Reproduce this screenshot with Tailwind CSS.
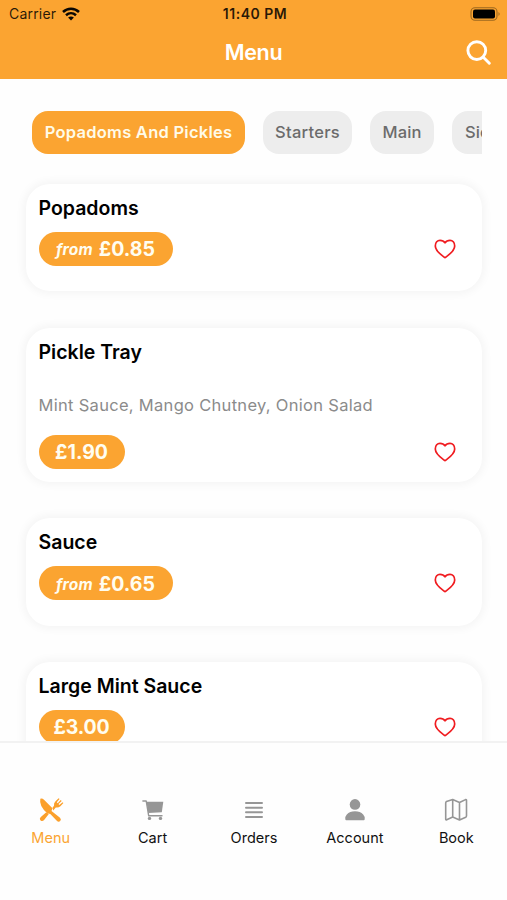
<!DOCTYPE html>
<html lang="en">
<head>
<meta charset="utf-8">
<title>Menu</title>
<script src="https://cdn.jsdelivr.net/npm/@tailwindcss/browser@4"></script>
</head>
<body class="bg-[#fefefe] font-['Inter','Liberation_Sans',sans-serif]">
<svg class="hidden">
  <symbol id="heart" viewBox="0 0 22 20"><path d="M11 18.700C8.200 16.500 1.300 12.500 1.300 7C1.300 3.600 3.400 1.400 6 1.400C8.400 1.400 10 2.400 11 3.900C12 2.400 13.600 1.400 16 1.400C18.600 1.400 20.700 3.600 20.700 7C20.700 12.500 13.800 16.500 11 18.700Z" fill="none" stroke="#f01c20" stroke-width="1.700" stroke-linejoin="round"/></symbol>
</svg>
<div class="flex h-[900px] w-[507px] flex-col overflow-hidden">
  <header class="h-[79px] shrink-0 bg-[#fba431]">
    <div class="grid h-[27px] grid-cols-[1fr_auto_1fr] items-center pl-[9px] pr-[6px] text-[14px] leading-none text-black/85">
      <div class="flex items-center gap-[6px]"><span class="tracking-[0.2px]">Carrier</span>
        <svg class="h-[14px] w-[18px]" viewBox="0 0 18 14" fill="none" stroke="#0a0703" stroke-width="2.500"><path d="M1 5C5.500 .6 12.500 .6 17 5M4 8.200C7 5.500 11 5.500 14 8.200"/><path d="M9 13.500L6.100 10.500Q9 8.400 11.900 10.500Z" fill="#0a0703" stroke="none"/></svg>
      </div>
      <span class="text-center text-[14px] font-semibold tracking-[0.5px]">11:40 PM</span>
      <svg class="h-[14px] w-[31px] justify-self-end" viewBox="0 0 31 14"><rect x="1" y=".7" width="26" height="12.600" rx="4" fill="none" stroke="#9c671f" stroke-width="1.100"/><rect x="3" y="2.600" width="22" height="8.800" rx="2" fill="#000"/><path d="M28.500 5Q30.800 7 28.500 9Z" fill="#9c671f"/></svg>
    </div>
    <div class="grid h-[51px] grid-cols-3 items-center px-[16px]">
      <h1 class="col-start-2 pt-[1px] text-center text-[21.5px] font-semibold leading-none tracking-[-0.3px] text-white">Menu</h1>
      <svg class="h-[25px] w-[25px] justify-self-end" viewBox="0 0 25 25" fill="none" stroke="#fff" stroke-width="2.900" stroke-linecap="round"><circle cx="10.800" cy="10.600" r="8.900"/><path d="M17.300 17.200L23.300 23.200"/></svg>
    </div>
  </header>
  <main class="min-h-0 flex-1 overflow-hidden">
    <nav class="ml-[32px] mr-[25px] mt-[32px] flex h-[43px] gap-[18px] overflow-hidden whitespace-nowrap text-[16.5px] font-medium tracking-[0.1px] text-[#6b6b6b]">
      <a class="flex w-[213px] shrink-0 items-center justify-center rounded-[16px] bg-[#fba431] font-semibold tracking-[0.25px] text-[#fffbe8]">Popadoms And Pickles</a>
      <a class="flex w-[89px] shrink-0 items-center justify-center rounded-[16px] bg-[#ededed] tracking-[0.25px]">Starters</a>
      <a class="flex w-[64px] shrink-0 items-center justify-center rounded-[16px] bg-[#ededed]">Main</a>
      <a class="flex w-[74px] shrink-0 items-center rounded-[16px] bg-[#ededed] pl-[13px]">Sides</a>
    </nav>
    <section class="ml-[26px] mr-[25px] mt-[30px] flex flex-col gap-[36.5px]">
      <article class="flex h-[107.3px] flex-col rounded-[24px] bg-white pl-[12.5px] pr-[26.5px] pt-[12px] shadow-[0_0_8px_3px_rgba(0,0,0,0.04)]">
        <h2 class="text-[19.5px] font-semibold leading-[25px]">Popadoms</h2>
        <div class="mt-[11px] flex items-center justify-between"><span class="flex h-[34px] w-[134px] items-center justify-center gap-[6px] rounded-full bg-[#fba431] pt-[2px] text-[#fffdf0]"><i class="text-[15.5px] font-bold tracking-[0.2px]">from</i><b class="text-[19.5px] font-bold">£0.85</b></span><svg class="h-[20px] w-[22px]"><use href="#heart"/></svg></div>
      </article>
      <article class="flex h-[154px] flex-col rounded-[24px] bg-white pl-[12.5px] pr-[26.5px] pt-[12px] shadow-[0_0_8px_3px_rgba(0,0,0,0.04)]">
        <h2 class="text-[19.5px] font-semibold leading-[25px]">Pickle Tray</h2>
        <p class="mt-[29px] text-[16.5px] leading-[22px] tracking-[0.3px] text-[#8b8b8b]">Mint Sauce, Mango Chutney, Onion Salad</p>
        <div class="mt-[19px] flex items-center justify-between"><span class="flex h-[34px] w-[86px] items-center justify-center rounded-full bg-[#fba431] pt-[2px] text-[19.5px] font-bold text-[#fffdf0]">£1.90</span><svg class="h-[20px] w-[22px]"><use href="#heart"/></svg></div>
      </article>
      <article class="flex h-[107.3px] flex-col rounded-[24px] bg-white pl-[12.5px] pr-[26.5px] pt-[12px] shadow-[0_0_8px_3px_rgba(0,0,0,0.04)]">
        <h2 class="text-[19.5px] font-semibold leading-[25px]">Sauce</h2>
        <div class="mt-[11px] flex items-center justify-between"><span class="flex h-[34px] w-[134px] items-center justify-center gap-[6px] rounded-full bg-[#fba431] pt-[2px] text-[#fffdf0]"><i class="text-[15.5px] font-bold tracking-[0.2px]">from</i><b class="text-[19.5px] font-bold">£0.65</b></span><svg class="h-[20px] w-[22px]"><use href="#heart"/></svg></div>
      </article>
      <article class="flex h-[107.3px] flex-col rounded-[24px] bg-white pl-[12.5px] pr-[26.5px] pt-[12px] shadow-[0_0_8px_3px_rgba(0,0,0,0.04)]">
        <h2 class="text-[19.5px] font-semibold leading-[25px]">Large Mint Sauce</h2>
        <div class="mt-[11px] flex items-center justify-between"><span class="flex h-[34px] w-[86px] items-center justify-center rounded-full bg-[#fba431] pt-[2px] text-[19.5px] font-bold tracking-[-0.2px] text-[#fffdf0]">£3.00</span><svg class="h-[20px] w-[22px]"><use href="#heart"/></svg></div>
      </article>
    </section>
  </main>
  <footer class="grid h-[159px] shrink-0 grid-cols-5 border-t-2 border-[#f2f2f2] bg-[#fefefe] pt-[54px] text-[14.5px] leading-[20px] text-[#111]">
    <a class="flex flex-col items-center gap-[5px] text-[#fba431]">
      <svg class="h-[26px] w-[26px]" viewBox="0 0 26 26" fill="#fba02c"><path d="M2.300 1.800Q4 .7 6 2.700L14.500 11.300L13.500 14L22 20.800Q23.700 22.500 22.200 24Q20.500 25.500 18.800 23.700L12.300 17L9.300 16.300Q.8 9 2.300 1.800Z"/><path d="M10.800 17L6.300 22.800Q4.300 25 2.600 23.400Q.9 21.600 3.100 19.800L8.300 15.300Z"/><path d="M14.500 10.700L16 8.800Q15.600 6 17.500 4.300L20.600 1.200L21.600 2L18.800 5.300L19.700 6.200L22.700 3L23.700 4L20.500 7L21.300 7.900L24.600 5.200L25.400 6.100L22.400 9.200Q20.500 11 17.800 10.500L15.200 13.500Z"/></svg>
      <span>Menu</span></a>
    <a class="flex flex-col items-center gap-[5px] pl-[1px]">
      <svg class="h-[26px] w-[22px]" viewBox="0 0 22 26" fill="#969696"><path d="M4.500 4.800H21.300L19.800 15.300L6.300 16Z"/><path d="M.9 4H4.200L6.700 18.800H20" fill="none" stroke="#969696" stroke-width="1.400" stroke-linecap="round" stroke-linejoin="round"/><circle cx="7.500" cy="21.400" r="1.700"/><circle cx="18.500" cy="21.400" r="1.700"/></svg>
      <span>Cart</span></a>
    <a class="flex flex-col items-center gap-[5px] pl-[1px]">
      <svg class="h-[26px] w-[20px]" viewBox="0 0 20 26" stroke="#969696" stroke-width="2" stroke-linecap="round"><path d="M2 6H18M2 10.700H18M2 15.300H18M2 20H18"/></svg>
      <span>Orders</span></a>
    <a class="flex flex-col items-center gap-[5px]">
      <svg class="h-[26px] w-[22px]" viewBox="0 0 22 26" fill="#969696"><circle cx="11" cy="7.400" r="5.300"/><path d="M1.300 22Q1 19.500 2.800 17.500Q5.700 14.300 11 14.300Q16.300 14.300 19.200 17.500Q21 19.500 20.700 22Q20.700 23.300 19.700 23.300H2.300Q1.300 23.300 1.300 22Z"/></svg>
      <span>Account</span></a>
    <a class="flex flex-col items-center gap-[5px]">
      <svg class="h-[26px] w-[24px]" viewBox="0 0 24 26" fill="none" stroke="#969696" stroke-width="1.600" stroke-linejoin="round"><path d="M1.700 6Q1.700 5 2.500 4.500L8.700 2.500L15.500 5.500L21.500 2.600Q22.500 2.300 22.500 3.300V18.700Q22.500 19.700 21.700 20.200L15.500 22.900L8.700 20L2.700 22.700Q1.700 23.200 1.700 22.200ZM8.700 2.500V20M15.500 5.500V22.900"/></svg>
      <span>Book</span></a>
  </footer>
</div>
</body>
</html>
